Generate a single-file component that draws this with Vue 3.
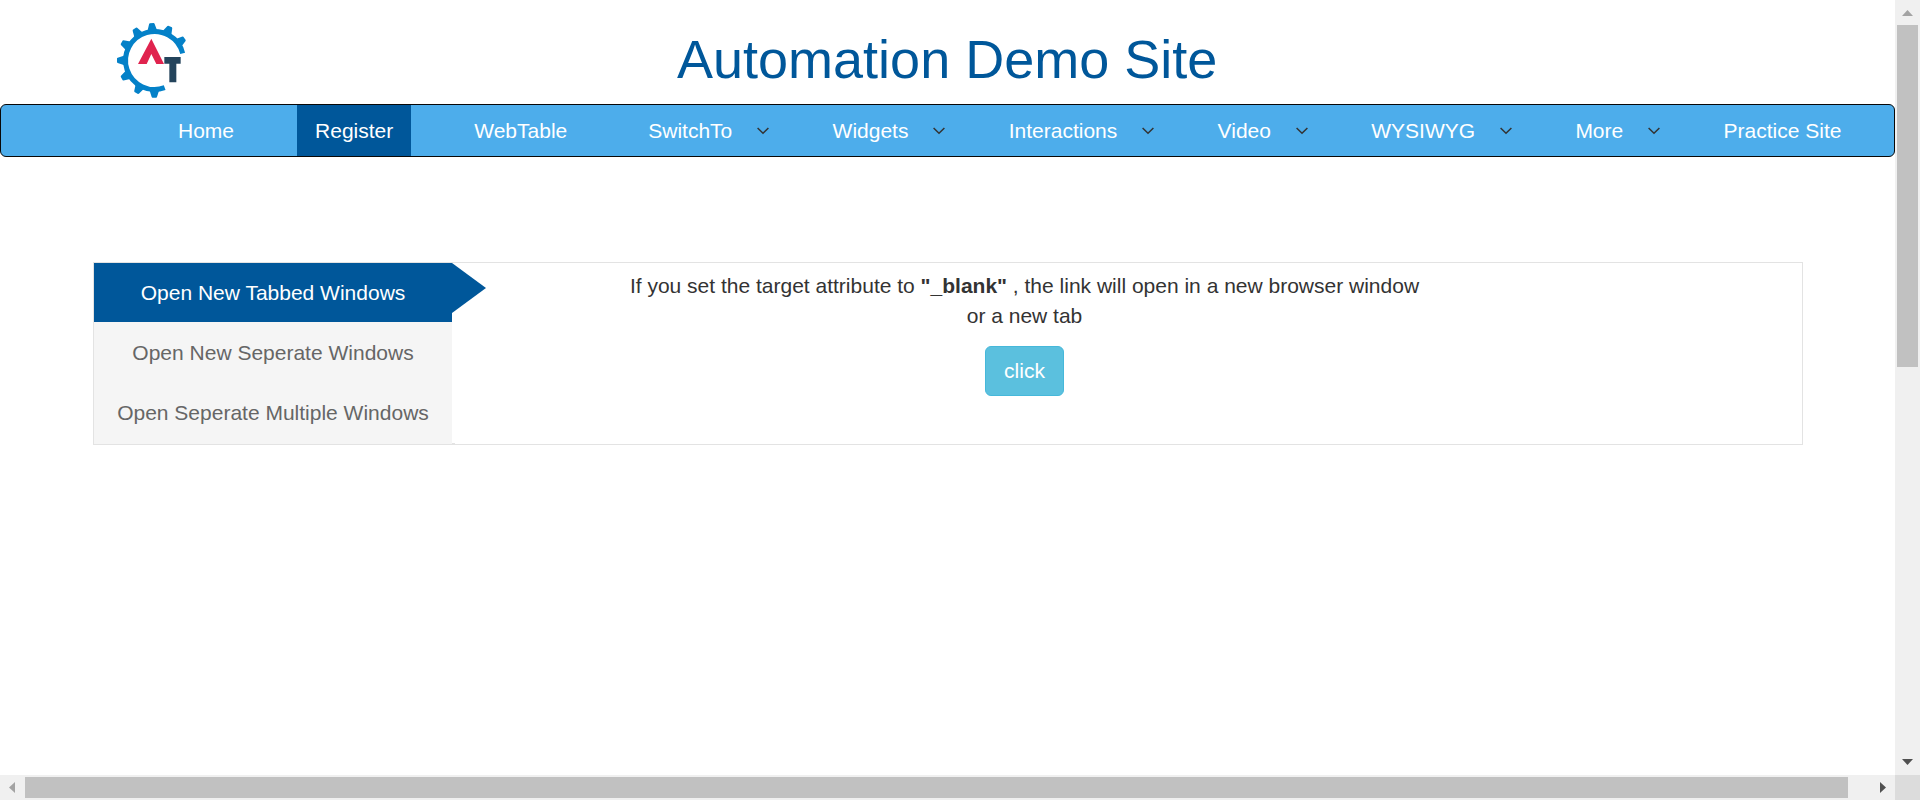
<script setup>
const navItems = [
  { label: 'Home' },
  { label: 'Register', active: true },
  { label: 'WebTable' },
  { label: 'SwitchTo', menu: true },
  { label: 'Widgets', menu: true },
  { label: 'Interactions', menu: true },
  { label: 'Video', menu: true },
  { label: 'WYSIWYG', menu: true },
  { label: 'More', menu: true },
  { label: 'Practice Site' },
]
const tabs = ['Open New Tabbed Windows', 'Open New Seperate Windows', 'Open Seperate Multiple Windows']
const teeth = [-94, -65, -36, -122, -151, 180, 151, 119, 90]
</script>

<template>
  <div class="window">
    <main class="page">
      <header class="header">
        <svg class="logo" viewBox="0 0 330 282">
          <path d="M248 130 A87 87 0 1 0 194 233" fill="none" stroke="#0481c8" stroke-width="15" />
          <path
            v-for="angle in teeth"
            :key="angle"
            d="M86 -17 L94 -13 L110 -8 L112 -6 V6 L110 8 L94 13 L86 17 Z"
            :transform="`translate(163 151) rotate(${angle})`"
            fill="#0481c8"
          />
          <path d="M154 86 L192 162 H169 L154 132 L140 162 H114 Z" fill="#e0234e" />
          <path d="M193 141 H242 V161 H229 V217 H208 V161 H193 Z" fill="#24445c" />
        </svg>
        <h1 class="title">Automation Demo Site</h1>
      </header>
      <nav class="nav">
        <a v-for="item in navItems" :key="item.label" class="nav-item" :class="{ active: item.active, menu: item.menu }">
          {{ item.label }}
          <svg v-if="item.menu" class="chevron" viewBox="0 0 12 8"><path d="M.6 1 L6 6.3 L11.4 1" /></svg>
        </a>
      </nav>
      <section class="panel">
        <div class="tabs">
          <div v-for="(tab, i) in tabs" :key="tab" class="tab" :class="{ selected: i === 0 }">{{ tab }}</div>
        </div>
        <div class="content">
          <p class="text">If you set the target attribute to <b>"_blank"</b> , the link will open in a new browser window<br />or a new tab</p>
          <button class="click">click</button>
        </div>
      </section>
    </main>
    <div class="bar vertical">
      <svg class="arrow" viewBox="0 0 25 25"><path d="M7 16 L12.5 10 L18 16 Z" fill="#a3a3a3" /></svg>
      <div class="thumb"></div>
      <svg class="arrow end" viewBox="0 0 25 25"><path d="M7 9 H18 L12.5 15 Z" fill="#505050" /></svg>
    </div>
    <div class="bar horizontal">
      <svg class="arrow" viewBox="0 0 25 25"><path d="M15 7 V18 L9 12.5 Z" fill="#a3a3a3" /></svg>
      <div class="thumb"></div>
      <svg class="arrow end" viewBox="0 0 25 25"><path d="M10 7 V18 L16 12.5 Z" fill="#505050" /></svg>
    </div>
    <div class="corner"></div>
  </div>
</template>

<style>
body {
  margin: 0;
  overflow: hidden;
}
</style>

<style scoped>
.window {
  display: grid;
  grid-template-columns: 1895px 25px;
  grid-template-rows: 775px 25px;
  width: 1920px;
  height: 800px;
  background: #fff;
  color: #333;
  font: 21px/30px "Liberation Sans", Arial, sans-serif;
}
.page {
  overflow: hidden;
}
.header {
  display: flex;
  height: 104px;
}
.logo {
  flex: none;
  width: 110px;
  height: 94px;
  margin: 10px 0 0 100px;
}
.title {
  margin: 30px 0 0 467px;
  font-size: 54px;
  line-height: 59px;
  font-weight: 400;
  color: #00579a;
  white-space: nowrap;
}
.nav {
  box-sizing: border-box;
  display: flex;
  gap: 45px;
  height: 53px;
  padding-left: 159px;
  border: 1px solid #080808;
  border-radius: 6px;
  background: #4dadeb;
}
.nav-item {
  display: flex;
  align-items: center;
  padding: 0 18px;
  color: #fff;
  white-space: nowrap;
}
.nav-item.active {
  background: #00579a;
}
.nav-item.menu {
  padding-right: 0.3px;
}
.chevron {
  width: 12px;
  height: 8px;
  margin-left: 25px;
  fill: none;
  stroke: #333;
  stroke-width: 1.5;
}
.panel {
  box-sizing: border-box;
  display: flex;
  width: 1710px;
  height: 183px;
  margin: 105px 0 0 93px;
  border: 1px solid #e3e3e3;
}
.tabs {
  width: 358px;
  background: #f5f5f5;
}
.tab {
  position: relative;
  height: 59px;
  margin-bottom: 1px;
  line-height: 60px;
  text-align: center;
  color: #666;
}
.tab.selected {
  background: #00579a;
  color: #fff;
}
.tab.selected::after {
  content: "";
  position: absolute;
  top: 0;
  left: 358px;
  border: solid transparent;
  border-width: 25px 0 25px 34px;
  border-left-color: #00579a;
}
.content {
  width: 1145px;
  text-align: center;
  background: linear-gradient(#e3e3e3, #e3e3e3) left bottom / 3px 1px no-repeat;
}
.text {
  margin: 8px 0 15px;
}
.click {
  box-sizing: border-box;
  width: 79px;
  height: 50px;
  padding: 0;
  border: 1px solid #46b8da;
  border-radius: 6px;
  background: #5bc0de;
  color: #fff;
  font: inherit;
}
.bar {
  display: flex;
  background: #f0f0f0;
}
.vertical {
  flex-direction: column;
}
.arrow {
  flex: none;
  width: 25px;
  height: 25px;
}
.end {
  margin-top: auto;
}
.horizontal .end {
  margin: 0 0 0 auto;
}
.thumb {
  background: #c1c1c1;
}
.vertical .thumb {
  height: 342px;
  margin: 0 2px;
}
.horizontal .thumb {
  width: 1823px;
  margin: 2px 0;
}
.corner {
  background: #dcdcdc;
}
</style>
